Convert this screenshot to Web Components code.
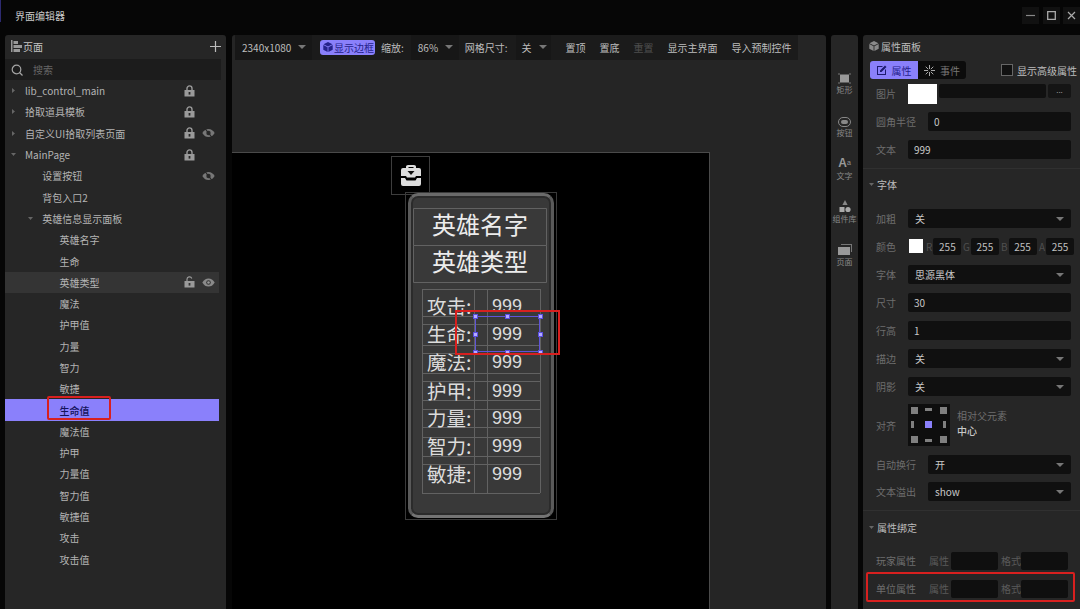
<!DOCTYPE html>
<html lang="zh">
<head>
<meta charset="utf-8">
<title>界面编辑器</title>
<style>
html, body { margin: 0; height: 609px; overflow: hidden; background: #060606; }
body { font: 10px "Noto Sans CJK SC", "Liberation Sans", sans-serif; color: #bdbdbd; }
</style>
</head>
<body>
<editor-app>
  <page-tree slot="left"></page-tree>
  <editor-stage slot="center"></editor-stage>
  <tool-strip slot="strip"></tool-strip>
  <prop-panel slot="right"></prop-panel>
</editor-app>

<script>
const CARET = `<svg width="8" height="4" viewBox="0 0 8 4"><path d="M0 0h8L4 4z" fill="#777"/></svg>`;
const LOCK = `<svg width="11" height="12" viewBox="0 0 11 12"><path d="M3 5V3.4a2.5 2.5 0 0 1 5 0V5" fill="none" stroke="#9a9a9a" stroke-width="1.4"/><path d="M.5 5h10v6.5H.5z" fill="#9a9a9a"/><path d="M4.6 7h1.8v2.6H4.6z" fill="#262626"/></svg>`;
const UNLOCK = `<svg width="11" height="12" viewBox="0 0 11 12"><path d="M3 5V3.4a2.5 2.5 0 0 1 4.8-1" fill="none" stroke="#9a9a9a" stroke-width="1.2"/><path d="M.5 5h10v6.5H.5z" fill="#9a9a9a"/><path d="M4.6 7h1.8v2.6H4.6z" fill="#333"/></svg>`;
const EYE = `<svg width="13" height="9" viewBox="0 0 13 9"><path d="M.3 4.5C2 1.6 4 .4 6.5.4s4.500 1.200 6.200 4.100C11 7.400 9 8.600 6.500 8.600S2 7.400.3 4.500z" fill="#8a8a8a"/><circle cx="6.500" cy="4.500" r="2.300" fill="#333"/><circle cx="6.500" cy="4.500" r="1.300" fill="#999"/></svg>`;
const EYE_OFF = `<svg width="13" height="10" viewBox="0 0 13 10"><path d="M.3 5C2 2.100 4 .9 6.500.9s4.500 1.200 6.200 4.100C11 7.900 9 9.100 6.500 9.100S2 7.900.3 5z" fill="#777"/><circle cx="6.500" cy="5" r="2.200" fill="#2a2a2a"/><path d="M3 .5l7 9" stroke="#262626" stroke-width="1.200"/></svg>`;
const CUBE = `<svg width="10" height="10" viewBox="0 0 10 10"><path d="M5 0l4.500 2.300L5 4.600.5 2.300zM.3 3.100l4.300 2.200V10L.3 7.700zM9.700 3.100L5.400 5.300V10l4.300-2.300z" fill="currentColor"/></svg>`;

const TEMPLATE_APP = document.createElement('template');
TEMPLATE_APP.innerHTML = /* html */ `
<style>
:host { display: flex; flex-direction: column; width: 1080px; height: 609px; overflow: hidden; position: relative; }
.title { height: 35px; flex: none; display: flex; align-items: center; padding: 0 0 4px 15px; box-sizing: border-box; color: #c9c9c9; }
.title span { flex: 1; }
.win { width: 17px; height: 17px; margin-left: 3.500px; background: #111; display: grid; place-items: center; }
.main { flex: 1; display: grid; grid-template-columns: 222px 594px 27px 217px; gap: 0 5px; padding-left: 5px; min-height: 0; }
.accent { position: absolute; left: 0; top: 0; width: 1px; height: 22px; background: #2d2a70; }
</style>
<div class="accent"></div>
<div class="title">
  <span>界面编辑器</span>
  <div class="win"><svg width="9" height="9" viewBox="0 0 9 9"><path d="M0 4.500h9" stroke="#888" stroke-width="1.200"/></svg></div>
  <div class="win"><svg width="9" height="9" viewBox="0 0 9 9"><path d="M.7.700h7.600v7.600H.7z" fill="none" stroke="#aaa" stroke-width="1.300"/></svg></div>
  <div class="win"><svg width="9" height="9" viewBox="0 0 9 9"><path d="M1 1l7 7M8 1L1 8" stroke="#aaa" stroke-width="1.200"/></svg></div>
</div>
<div class="main">
  <slot name="left"></slot>
  <slot name="center"></slot>
  <slot name="strip"></slot>
  <slot name="right"></slot>
</div>
`;

class EditorAppElement extends HTMLElement {
  constructor() {
    super();
    this.attachShadow({ mode: 'open' }).appendChild(TEMPLATE_APP.content.cloneNode(true));
  }
}
customElements.define('editor-app', EditorAppElement);

// one row of the page tree
class TreeRowElement extends HTMLElement {
  connectedCallback() {
    const depth = Number(this.getAttribute('depth') || 0);
    const arrow = this.getAttribute('arrow');
    const lock = this.getAttribute('lock');
    const eye = this.getAttribute('eye');
    let arrowSvg = '';
    if (arrow === 'right') arrowSvg = `<svg width="3" height="5" viewBox="0 0 3 5"><path d="M0 0l3 2.500L0 5z" fill="#666"/></svg>`;
    if (arrow === 'down') arrowSvg = `<svg width="5" height="3" viewBox="0 0 5 3"><path d="M0 0h5L2.500 3z" fill="#666"/></svg>`;
    this.attachShadow({ mode: 'open' }).innerHTML = /* html */ `
<style>
:host { display: flex; align-items: center; height: 21.300px; margin-right: 7px; color: #b4b4b4; position: relative; }
:host([state="hover"]) { background: #343434; }
:host([state="selected"]) { background: #8a80fb; color: #14125a; font-weight: 500; }
.arrow { width: 5px; display: flex; justify-content: center; position: absolute; top: 0; bottom: 0; align-items: center; }
.name { flex: 1; white-space: nowrap; padding-left: ${20 + depth * 17.25}px; }
.icon { width: 11px; display: flex; justify-content: center; position: absolute; }
.lock { right: 24px; }
.eye { right: 4px; width: 13px; }
</style>
<div class="arrow" style="left:${6 + depth * 17}px">${arrowSvg}</div>
<div class="name"><slot></slot></div>
<div class="icon lock">${lock === 'open' ? UNLOCK : lock ? LOCK : ''}</div>
<div class="icon eye">${eye === 'on' ? EYE : eye ? EYE_OFF : ''}</div>
`;
  }
}
customElements.define('tree-row', TreeRowElement);

const TEMPLATE_TREE = document.createElement('template');
TEMPLATE_TREE.innerHTML = /* html */ `
<style>
:host { display: block; width: 221px; height: 574px; background: #262626; border-radius: 3px 3px 0 0; position: relative; }
.head { height: 24px; display: flex; align-items: center; padding: 0 5px 2px 6px; box-sizing: border-box; color: #c4c4c4; }
.head span { flex: 1; padding-left: 1px; }
.search { height: 21px; background: #1c1c1c; display: flex; align-items: center; padding: 0 0 0 6px; margin-right: 5px; color: #666; }
.search span { margin-left: 10px; }
.mark { position: absolute; left: 42px; top: 361px; width: 64px; height: 24px; border: 2px solid #d8201f; box-sizing: border-box; border-radius: 2px; }
</style>
<div class="head">
  <svg width="11" height="12" viewBox="0 0 11 12"><path d="M0 0h1.500v12H0zM2.500 1H7v3H2.500zM2.500 5h8.500v3H2.500zM2.500 9H9v3H2.500z" fill="#9a9a9a"/></svg>
  <span>页面</span>
  <svg width="11" height="11" viewBox="0 0 11 11"><path d="M5.500 0v11M0 5.500h11" stroke="#bbb" stroke-width="1.200"/></svg>
</div>
<div class="search">
  <svg width="12" height="12" viewBox="0 0 12 12"><circle cx="5.500" cy="5.500" r="4.300" fill="none" stroke="#a5a5a5" stroke-width="1.200"/><path d="M8.500 8.500l3 3" stroke="#a5a5a5" stroke-width="1.200"/></svg>
  <span>搜索</span>
</div>
<tree-row arrow="right" lock="on">lib_control_main</tree-row>
<tree-row arrow="right" lock="on">拾取道具模板</tree-row>
<tree-row arrow="right" lock="on" eye="off">自定义UI拾取列表页面</tree-row>
<tree-row arrow="down" lock="on">MainPage</tree-row>
<tree-row depth="1" eye="off">设置按钮</tree-row>
<tree-row depth="1">背包入口2</tree-row>
<tree-row depth="1" arrow="down">英雄信息显示面板</tree-row>
<tree-row depth="2">英雄名字</tree-row>
<tree-row depth="2">生命</tree-row>
<tree-row depth="2" state="hover" lock="open" eye="on">英雄类型</tree-row>
<tree-row depth="2">魔法</tree-row>
<tree-row depth="2">护甲值</tree-row>
<tree-row depth="2">力量</tree-row>
<tree-row depth="2">智力</tree-row>
<tree-row depth="2">敏捷</tree-row>
<tree-row depth="2" state="selected">生命值</tree-row>
<tree-row depth="2">魔法值</tree-row>
<tree-row depth="2">护甲</tree-row>
<tree-row depth="2">力量值</tree-row>
<tree-row depth="2">智力值</tree-row>
<tree-row depth="2">敏捷值</tree-row>
<tree-row depth="2">攻击</tree-row>
<tree-row depth="2">攻击值</tree-row>
<div class="mark"></div>
`;

class PageTreeElement extends HTMLElement {
  constructor() {
    super();
    this.attachShadow({ mode: 'open' }).appendChild(TEMPLATE_TREE.content.cloneNode(true));
  }
}
customElements.define('page-tree', PageTreeElement);

const TEMPLATE_STAGE = document.createElement('template');
TEMPLATE_STAGE.innerHTML = /* html */ `
<style>
:host { display: flex; flex-direction: column; height: 574px; background: #252525; border-radius: 3px 3px 0 0; overflow: hidden; }
.bar { height: 25px; width: 563px; margin-left: 3px; flex: none; background: #1b1b1b; display: flex; align-items: center; color: #bdbdbd; white-space: nowrap; padding-bottom: 1px; box-sizing: border-box; }
.drop { height: 25px; margin-top: 1px; padding-bottom: 1px; display: flex; align-items: center; background: #171717; box-sizing: border-box; }
.drop svg { margin-left: 7px; }
.chip { width: 55px; height: 15px; background: #8a80fb; color: #26228c; border-radius: 3px; margin: 0 6px 0 8px; display: flex; align-items: center; padding-left: 3px; box-sizing: border-box; overflow: hidden; gap: 1px; }
.dim { color: #4e4e4e; }
.fill { height: 92px; flex: none; }
.canvas { flex: 1; width: 478px; background: #000; box-sizing: border-box; border-top: 1px solid #4a4a4a; border-right: 1px solid #4a4a4a; position: relative; }
.iconbox { position: absolute; left: 159px; top: 3px; width: 39px; height: 39px; border: 1px solid #3d3d3d; display: grid; place-items: center; box-sizing: border-box; }
</style>
<div class="bar">
  <div class="drop" style="width:77px;padding-left:7px">2340x1080${CARET}</div>
  <div class="chip">${CUBE}<span>显示边框</span></div>
  <span>缩放:</span>
  <div class="drop" style="width:48px;margin-left:7px;padding-left:7px">86%${CARET}</div>
  <span style="margin-left:6px">网格尺寸:</span>
  <div class="drop" style="width:35px;margin-left:8px;padding-left:6px">关${CARET}</div>
  <span style="margin-left:15px">置顶</span>
  <span style="margin-left:14px">置底</span>
  <span class="dim" style="margin-left:14px">重置</span>
  <span style="margin-left:14px">显示主界面</span>
  <span style="margin-left:14px">导入预制控件</span>
</div>
<div class="fill"></div>
<div class="canvas">
  <div class="iconbox">
    <svg width="20" height="21" viewBox="0 0 20 21"><path fill-rule="evenodd" d="M5 3V1.500Q5 0 7 0h6q2 0 2 1.500V3h3q2 0 2 2v6h-5l-1 1.500H6L5 11H0V5q0-2 2-2zM7.500 3h5V2h-5z" fill="#ddd"/><path d="M0 13h4l1.500 2.500h9L16 13h4v6q0 2-2 2H2q-2 0-2-2z" fill="#ddd"/><path d="M6.500 6h7L10 10z" fill="#111"/></svg>
  </div>
  <hero-card></hero-card>
</div>
`;

class EditorStageElement extends HTMLElement {
  constructor() {
    super();
    this.attachShadow({ mode: 'open' }).appendChild(TEMPLATE_STAGE.content.cloneNode(true));
  }
}
customElements.define('editor-stage', EditorStageElement);

const STATS = [['攻击:', 306], ['生命:', 334], ['魔法:', 362], ['护甲:', 391], ['力量:', 418], ['智力:', 446], ['敏捷:', 474]];
const HLINES = [289, 316, 324, 345, 353, 373, 381, 400, 409, 427, 437, 456, 464, 493];

// the widget on the canvas; coordinates below are relative to the card box
class HeroCardElement extends HTMLElement {
  connectedCallback() {
    const ox = 406, oy = 193;
    const lines = HLINES.map((y) => `<path d="M${422 - ox} ${y - oy + 0.5}H${540 - ox}"/>`).join('');
    const stats = STATS.map(([label, y]) => `
      <div class="stat" style="top:${y - oy - 16}px"><span class="k">${label}</span><span class="v">999</span></div>`).join('');
    const handles = [475, 507, 540].flatMap((x) => [316, 334, 352].map((y) =>
      x === 507 && y === 334 ? '' : `<i style="left:${x - ox - 2.5}px;top:${y - oy - 2.5}px"></i>`)).join('');
    this.attachShadow({ mode: 'open' }).innerHTML = /* html */ `
<style>
:host { position: absolute; left: 173px; top: 39px; width: 152px; height: 328px; border: 1px solid #3a3a3a; box-sizing: border-box; }
.body { position: absolute; left: 2px; right: 2px; top: 0; bottom: 1px; background: #393939; border: 3px solid #5a5a5a; border-top-color: #6a6a6a; border-bottom-color: #747474; border-radius: 10px; box-sizing: border-box; box-shadow: inset 0 0 0 2px #2b2b2b; }
svg.grid { position: absolute; left: 0; top: 0; }
.name { position: absolute; left: 7px; width: 134px; height: 31px; display: grid; place-items: center; font-size: 24px; color: #ececec; line-height: 1; }
.stat { position: absolute; left: 21px; width: 120px; height: 30px; display: flex; align-items: center; color: #dcdcdc; }
.k { width: 50px; font-size: 19.500px; white-space: nowrap; }
.v { font-family: "Liberation Sans", sans-serif; font-size: 18px; margin-left: 15px; padding-top: 2px; }
.sel { position: absolute; left: ${475 - ox}px; top: ${316 - oy}px; width: 65px; height: 36px; border: 1px solid #5f54d8; box-sizing: border-box; }
i { position: absolute; width: 5px; height: 5px; background: #b4acff; border: 1px solid #5a4ee0; box-sizing: border-box; }
.red { position: absolute; left: ${455 - ox}px; top: ${310 - oy}px; width: 105px; height: 45px; border: 2px solid #d8201f; box-sizing: border-box; }
</style>
<div class="body"></div>
<svg class="grid" width="150" height="326" fill="none" stroke="#626262" stroke-width="1">
  <path d="M7.500 15.500h133v37h-133zM7.500 52.500v37h133v-37"/>
  ${lines}
  <path d="M${422 - ox + 0.5} ${289 - oy}V${493 - oy}M${474 - ox + 0.5} ${289 - oy}V${493 - oy}M${487 - ox + 0.5} ${289 - oy}V${493 - oy}M${540 - ox + 0.5} ${289 - oy}V${493 - oy}"/>
</svg>
<div class="name" style="top:15px">英雄名字</div>
<div class="name" style="top:52px">英雄类型</div>
${stats}
<div class="sel"></div>
${handles}
<div class="red"></div>
`;
  }
}
customElements.define('hero-card', HeroCardElement);

const TEMPLATE_STRIP = document.createElement('template');
TEMPLATE_STRIP.innerHTML = /* html */ `
<style>
:host { display: flex; flex-direction: column; align-items: center; height: 574px; background: #262626; border-radius: 3px 3px 0 0; padding-top: 35px; box-sizing: border-box; color: #888; font-size: 8px; line-height: 10px; }
.tool { height: 43px; display: flex; flex-direction: column; align-items: center; white-space: nowrap; }
.ic { height: 14px; display: flex; align-items: flex-end; justify-content: center; margin-bottom: 1px; font: 700 12px/14px "Liberation Sans", sans-serif; color: #999; }
.ic small { font-size: 7px; font-weight: 400; }
</style>
<div class="tool"><div class="ic"><svg width="13" height="11" viewBox="0 0 13 11"><path d="M2 1.500h9v8H2z" fill="#999"/><path d="M0 1h2M11 1h2M0 10h2M11 10h2" stroke="#777"/></svg></div>矩形</div>
<div class="tool"><div class="ic"><svg width="13" height="10" viewBox="0 0 13 10"><rect x=".5" y=".5" width="12" height="9" rx="4.500" fill="none" stroke="#888"/><rect x="3" y="3" width="7" height="4" rx="2" fill="#888"/></svg></div>按钮</div>
<div class="tool"><div class="ic">A<small>a</small></div>文字</div>
<div class="tool"><div class="ic"><svg width="12" height="13" viewBox="0 0 12 13"><path d="M6 0l2.600 5H3.400z" fill="#888"/><path d="M.5 7h5v5h-5z" fill="#aaa"/><circle cx="9" cy="9.500" r="2.600" fill="#aaa"/></svg></div>组件库</div>
<div class="tool"><div class="ic"><svg width="14" height="12" viewBox="0 0 14 12"><path d="M3 0h11v8h-1V1H3z" fill="#777"/><path d="M0 3h12v8H0z" fill="#999"/></svg></div>页面</div>
`;

class ToolStripElement extends HTMLElement {
  constructor() {
    super();
    this.attachShadow({ mode: 'open' }).appendChild(TEMPLATE_STRIP.content.cloneNode(true));
  }
}
customElements.define('tool-strip', ToolStripElement);

// label + control row of the properties panel
class PropRowElement extends HTMLElement {
  connectedCallback() {
    const label = this.getAttribute('label') || '';
    const value = this.getAttribute('value') || '';
    const inset = this.getAttribute('inset') || '32';
    const caret = this.hasAttribute('drop') ? CARET : '';
    const control = this.hasAttribute('custom')
      ? `<slot></slot>`
      : `<div class="field" style="left:${inset}px;padding-left:${caret ? 7 : 6}px"><span>${value}</span>${caret}</div>`;
    this.attachShadow({ mode: 'open' }).innerHTML = /* html */ `
<style>
:host { display: block; position: relative; height: 19px; margin: 0 9px 9px 13px; width: 195px; color: #6e6e6e; }
.label { line-height: 19px; white-space: nowrap; }
.field { position: absolute; top: 0; right: 0; height: 19px; background: #101010; border-radius: 2px; color: #c8c8c8; display: flex; align-items: center; justify-content: space-between; padding-right: 7px; box-sizing: border-box; }
::slotted(*) { position: absolute; }
</style>
<div class="label">${label}</div>
${control}
`;
  }
}
customElements.define('prop-row', PropRowElement);

const TEMPLATE_PROPS = document.createElement('template');
TEMPLATE_PROPS.innerHTML = /* html */ `
<style>
:host { display: block; height: 574px; background: #262626; border-radius: 3px 0 0 0; position: relative; overflow: hidden; }
.head { height: 24px; display: flex; align-items: center; gap: 2px; padding: 0 0 2px 6px; box-sizing: border-box; color: #bdbdbd; }
.head svg { color: #8a8a8a; }
.tabs { height: 18px; margin: 2px 0 5px 7px; display: flex; align-items: center; }
.tab { width: 48px; height: 18px; display: flex; align-items: center; justify-content: center; gap: 5px; background: #0c0c0c; color: #777; border-radius: 0 3px 3px 0; }
.tab.on { background: #8a80fb; color: #26228c; border-radius: 3px 0 0 3px; }
.check { width: 12px; height: 12px; margin-left: 35px; background: #111; border: 1px solid #666; box-sizing: border-box; }
.adv { margin-left: 4px; color: #bdbdbd; white-space: nowrap; }
.sep { height: 1px; background: #303030; margin: 0 0 5px; }
.section { height: 20px; margin-bottom: 15px; display: flex; align-items: center; padding-left: 6px; gap: 3px; color: #bdbdbd; }
.section svg { flex: none; }
.swatch { left: 32px; top: 0; width: 29px; height: 20px; background: #fff; }
.path { left: 63px; top: 0; width: 107px; height: 14px; background: #101010; border-radius: 2px; }
.more { left: 172px; top: 0; width: 23px; height: 14px; background: #151515; border-radius: 2px; color: #999; font-size: 8px; line-height: 12px; text-align: center; }
.swatch2 { left: 33px; top: 2px; width: 14px; height: 14px; background: #fff; }
.rgb { top: 0; display: flex; align-items: center; height: 19px; color: #4f4f4f; gap: 1px; }
.rgb b { font-weight: 400; display: block; width: 28px; height: 17px; line-height: 17px; background: #101010; border-radius: 2px; color: #c0c0c0; text-align: center; font-size: 10px; }
.align { left: 32px; top: -12px; width: 42px; height: 42px; background: #0e0e0e; }
.align-text { left: 81px; top: -8px; line-height: 15px; color: #6e6e6e; white-space: nowrap; }
.align-text strong { display: block; color: #c8c8c8; font-weight: 500; }
.bind { left: 0; right: 0; top: 0; height: 19px; display: flex; align-items: center; color: #5a5a5a; white-space: nowrap; }
.bind i { display: block; width: 47px; height: 18px; background: #0f0f0f; border-radius: 2px; }
.mark { position: absolute; left: 3px; top: 537px; width: 209px; height: 30px; border: 2px solid #d8201f; box-sizing: border-box; border-radius: 2px; }
</style>
<div class="head">${CUBE}<span>属性面板</span></div>
<div class="tabs">
  <div class="tab on"><svg width="10" height="10" viewBox="0 0 10 10"><path d="M0 1h6L5 2H1v7h7V5l1-1v6H0z M3 5.500L8 .5 9.500 2l-5 5H3z" fill="#1d1a70"/></svg>属性</div>
  <div class="tab"><svg width="11" height="11" viewBox="0 0 11 11"><path d="M5.500 0v4M5.500 7v4M0 5.500h4M7 5.500h4M1.700 1.700l2.500 2.500M6.800 6.800l2.500 2.500M9.300 1.700L6.800 4.200M4.200 6.800L1.700 9.300" stroke="#aaa"/></svg>事件</div>
  <div class="check"></div>
  <div class="adv">显示高级属性</div>
</div>
<prop-row label="图片" custom>
  <div class="swatch"></div><div class="path"></div><div class="more">...</div>
</prop-row>
<prop-row label="圆角半径" value="0" inset="52"></prop-row>
<prop-row label="文本" value="999"></prop-row>
<div class="sep"></div>
<div class="section"><svg width="5" height="3" viewBox="0 0 5 3"><path d="M0 0h5L2.500 3z" fill="#666"/></svg>字体</div>
<prop-row label="加粗" value="关" drop></prop-row>
<prop-row label="颜色" custom>
  <div class="swatch2"></div>
  <div class="rgb" style="left:50px">R<b>255</b></div>
  <div class="rgb" style="left:87px">G<b>255</b></div>
  <div class="rgb" style="left:125px">B<b>255</b></div>
  <div class="rgb" style="left:163px">A<b>255</b></div>
</prop-row>
<prop-row label="字体" value="思源黑体" drop></prop-row>
<prop-row label="尺寸" value="30"></prop-row>
<prop-row label="行高" value="1"></prop-row>
<prop-row label="描边" value="关" drop></prop-row>
<prop-row label="阴影" value="关" drop></prop-row>
<prop-row label="对齐" custom style="margin-top:20px;margin-bottom:20px">
  <svg class="align" width="42" height="42" viewBox="0 0 42 42">
    <rect width="42" height="42" fill="#0e0e0e"/>
    <g fill="#808080"><rect x="3" y="3" width="7" height="7"/><rect x="17" y="4" width="7" height="3"/><rect x="32" y="3" width="7" height="7"/><rect x="3" y="17" width="3" height="7"/><rect x="35" y="17" width="3" height="7"/><rect x="3" y="32" width="7" height="7"/><rect x="17" y="35" width="7" height="3"/><rect x="32" y="32" width="7" height="7"/></g>
    <rect x="17" y="17" width="7" height="7" fill="#8a80fb"/>
  </svg>
  <div class="align-text">相对父元素<strong>中心</strong></div>
</prop-row>
<prop-row label="自动换行" value="开" inset="52" drop></prop-row>
<prop-row label="文本溢出" value="show" inset="52" drop style="margin-top:-1px"></prop-row>
<div class="sep" style="margin-bottom:6px"></div>
<div class="section" style="margin-bottom:14px"><svg width="5" height="3" viewBox="0 0 5 3"><path d="M0 0h5L2.500 3z" fill="#666"/></svg>属性绑定</div>
<prop-row label="玩家属性" custom>
  <div class="bind" style="left:53px"><span style="margin-right:2px">属性</span><i></i><span style="margin-left:3px">格式</span><i></i></div>
</prop-row>
<prop-row label="单位属性" custom>
  <div class="bind" style="left:53px"><span style="margin-right:2px">属性</span><i></i><span style="margin-left:3px">格式</span><i></i></div>
</prop-row>
<div class="mark"></div>
`;

class PropPanelElement extends HTMLElement {
  constructor() {
    super();
    this.attachShadow({ mode: 'open' }).appendChild(TEMPLATE_PROPS.content.cloneNode(true));
  }
}
customElements.define('prop-panel', PropPanelElement);
</script>
</body>
</html>
